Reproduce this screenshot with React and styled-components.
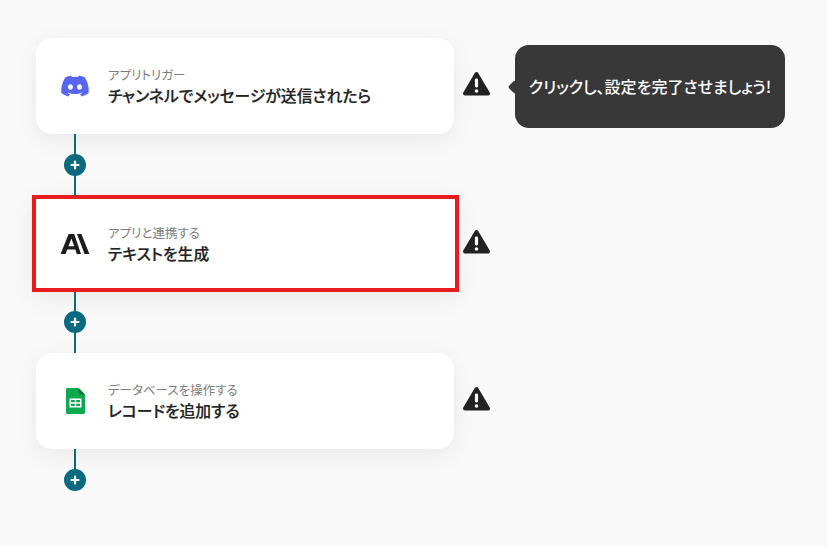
import React from "react";
import styled, { createGlobalStyle } from "styled-components";
import { FaDiscord } from "react-icons/fa";

const Global = createGlobalStyle`
  html, body { margin: 0; padding: 0; background: #f9f9f9; }
  body { font-family: "Noto Sans CJK JP", "Noto Sans", sans-serif; overflow: hidden; font-feature-settings: "palt"; }
`;

const Page = styled.div`
  width: 827px;
  height: 546px;
  box-sizing: border-box;
  padding: 38px 0 0 36px;
  display: flex;
  flex-direction: column;
`;

const Row = styled.div`
  display: flex;
  align-items: center;
  height: 96px;
`;

const Card = styled.div`
  width: 418px;
  height: 96px;
  box-sizing: border-box;
  flex: none;
  display: flex;
  align-items: center;
  padding-left: 20px;
  gap: 14px;
  background: #fff;
  border-radius: 16px;
  box-shadow: 0 6px 24px rgba(0, 0, 0, 0.07);
`;

const ActiveCard = styled(Card)`
  width: 427px;
  height: 97px;
  margin: -1px -5px 0 -4px;
  padding-left: 20px;
  border: 4px solid #e81c1c;
  border-radius: 0;
`;

const IconBox = styled.div`
  width: 38px;
  height: 38px;
  flex: none;
  display: flex;
  align-items: center;
  justify-content: center;
`;

const Texts = styled.div`
  display: flex;
  flex-direction: column;
  gap: 2px;
  padding-top: 2px;
`;

const Label = styled.div`
  font-size: 12.5px;
  line-height: 16px;
  color: #7d7d7d;
`;

const Title = styled.div`
  font-size: 15.8px;
  line-height: 22px;
  font-weight: 500;
  color: #222;
  -webkit-text-stroke: 0.2px #222;
`;

const Warn = styled.svg`
  width: 27px;
  height: 26px;
  flex: none;
  margin-left: 9px;
  margin-top: -4px;
`;

const Tip = styled.div`
  position: relative;
  width: 270px;
  height: 83px;
  margin-left: 25px;
  border-radius: 14px;
  background: #383838;
  color: #fff;
  font-size: 16px;
  font-weight: 500;
  display: flex;
  align-items: center;
  justify-content: center;
  white-space: nowrap;
  &::before {
    content: "";
    position: absolute;
    left: -5px;
    top: 37px;
    width: 10px;
    height: 10px;
    background: #383838;
    transform: rotate(45deg);
    border-radius: 2px;
  }
`;

const Connector = styled.div`
  position: relative;
  width: 78px;
  height: ${(p) => p.$h}px;
  display: flex;
  align-items: flex-start;
  justify-content: center;
  flex: none;
  &::before {
    content: "";
    position: absolute;
    left: 38px;
    top: 0;
    bottom: ${(p) => (p.$open ? "auto" : "0")};
    height: ${(p) => (p.$open ? "20px" : "auto")};
    width: 2px;
    background: #0b6a80;
  }
`;

const Plus = styled.div`
  position: relative;
  margin-top: ${(p) => p.$top}px;
  width: 22px;
  height: 22px;
  border-radius: 50%;
  background: #0b6a80;
  display: flex;
  align-items: center;
  justify-content: center;
`;

const Discord = styled(FaDiscord)`
  width: 30px;
  height: 30px;
  color: #5865f2;
`;

const WarnIcon = () => (
  <Warn viewBox="0.5 0 27 26">
    <path
      d="M14 3 L25.5 22.5 H2.5 Z"
      fill="#222"
      stroke="#222"
      strokeWidth="4"
      strokeLinejoin="round"
    />
    <rect x="12.4" y="7.5" width="3.2" height="9" rx="1.4" fill="#fff" />
    <circle cx="14" cy="20" r="1.8" fill="#fff" />
  </Warn>
);

const PlusIcon = ({ top }) => (
  <Plus $top={top}>
    <svg width="10" height="10" viewBox="0 0 10 10">
      <path d="M5 1.5v7M1.5 5h7" stroke="#fff" strokeWidth="2.2" strokeLinecap="round" />
    </svg>
  </Plus>
);

const AnthropicIcon = () => (
  <svg width="30" height="20" viewBox="0 0 30 20">
    <path
      d="M8.6 0 H14.2 L21 20 H16.8 L15.3 15.6 H7.2 L5.6 20 H.6 Z M11.4 4.6 L8.5 12.3 H14.2 Z"
      fill="#1c1c1c"
      fillRule="evenodd"
    />
    <path d="M17 0 H21.4 L29.4 20 H24.6 Z" fill="#1c1c1c" />
  </svg>
);

const SheetsIcon = () => (
  <svg width="19" height="26" viewBox="0 0 19 26">
    <path d="M1.6 0 H12.5 L19 6.5 V24.4 A1.6 1.6 0 0 1 17.4 26 H1.6 A1.6 1.6 0 0 1 0 24.4 V1.6 A1.6 1.6 0 0 1 1.6 0 Z" fill="#0da94f" />
    <path d="M12.5 0 L19 6.5 H14 A1.5 1.5 0 0 1 12.5 5 Z" fill="#0a7a3a" />
    <path
      d="M3.5 10.5 H15.5 V19.5 H3.5 Z M5 12 V14.3 H8.8 V12 Z M10.2 12 V14.3 H14 V12 Z M5 15.7 V18 H8.8 V15.7 Z M10.2 15.7 V18 H14 V15.7 Z"
      fill="#fff"
      fillRule="evenodd"
    />
  </svg>
);

const steps = [
  { label: "アプリトリガー", title: "チャンネルでメッセージが送信されたら", icon: <Discord />, tip: true, plus: 20 },
  { label: "アプリと連携する", title: "テキストを生成", icon: <AnthropicIcon />, active: true, plus: 19 },
  { label: "データベースを操作する", title: "レコードを追加する", icon: <SheetsIcon />, plus: 20, open: true },
];

export default function App() {
  return (
    <Page>
      <Global />
      {steps.map((s, i) => {
        const CardKind = s.active ? ActiveCard : Card;
        return (
          <React.Fragment key={s.title}>
            <Row>
              <CardKind>
                <IconBox>{s.icon}</IconBox>
                <Texts>
                  <Label>{s.label}</Label>
                  <Title>{s.title}</Title>
                </Texts>
              </CardKind>
              <WarnIcon />
              {s.tip && <Tip>クリックし、設定を完了させましょう!</Tip>}
            </Row>
            <Connector $h={i === 0 ? 62 : 61} $open={s.open}>
              <PlusIcon top={s.plus} />
            </Connector>
          </React.Fragment>
        );
      })}
    </Page>
  );
}
